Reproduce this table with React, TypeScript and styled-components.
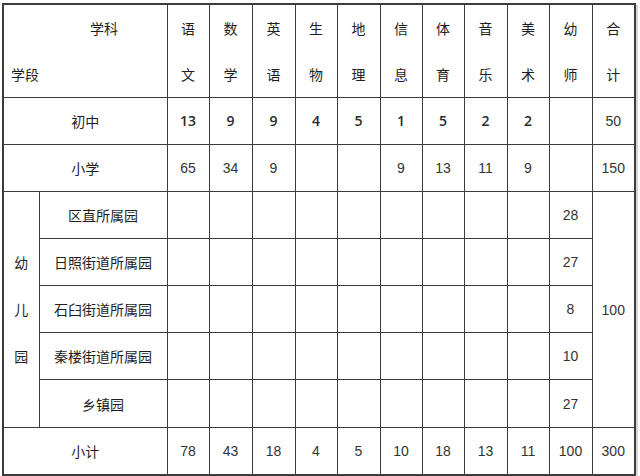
import styled, { createGlobalStyle } from 'styled-components'

const GlobalStyle = createGlobalStyle`
  html, body {
    margin: 0;
    padding: 0;
    background: #fff;
  }
  body {
    font-family: "Noto Sans CJK SC", "Liberation Sans", sans-serif;
    color: #1e1e1e;
  }
`

const subjects = ['语文', '数学', '英语', '生物', '地理', '信息', '体育', '音乐', '美术', '幼师', '合计']

const colWidths = [36, 128, 42, 43, 43, 42, 43, 42, 42, 43, 42, 43, 43]

const juniorRow = ['13', '9', '9', '4', '5', '1', '5', '2', '2', '', '50']
const primaryRow = ['65', '34', '9', '', '', '9', '13', '11', '9', '', '150']
const totalRow = ['78', '43', '18', '4', '5', '10', '18', '13', '11', '100', '300']

const kindergartens = [
  { name: '区直所属园', count: '28' },
  { name: '日照街道所属园', count: '27' },
  { name: '石臼街道所属园', count: '8' },
  { name: '秦楼街道所属园', count: '10' },
  { name: '乡镇园', count: '27' },
]

export default function App() {
  return (
    <>
      <GlobalStyle />
      <Page>
        <Table>
          <colgroup>
            {colWidths.map((w, i) => (
              <col key={i} style={{ width: w }} />
            ))}
          </colgroup>
          <tbody>
            <HeaderRow>
              <Cell colSpan={2}>
                <Corner>
                  <span className="top">学科</span>
                  <span className="bottom">学段</span>
                </Corner>
              </Cell>
              {subjects.map((s) => (
                <Cell key={s}>
                  <Stacked>
                    {s.split('').map((ch) => (
                      <span key={ch}>{ch}</span>
                    ))}
                  </Stacked>
                </Cell>
              ))}
            </HeaderRow>

            <BodyRow>
              <Cell colSpan={2}>初中</Cell>
              {juniorRow.map((v, i) => (
                <Num key={i} $bold={i < 9}>{v}</Num>
              ))}
            </BodyRow>

            <BodyRow>
              <Cell colSpan={2}>小学</Cell>
              {primaryRow.map((v, i) => (
                <Num key={i}>{v}</Num>
              ))}
            </BodyRow>

            {kindergartens.map((k, r) => (
              <BodyRow key={k.name} $h={r === 4 ? 48 : 47}>
                {r === 0 && (
                  <Cell rowSpan={5}>
                    <VerticalLabel>
                      <span>幼</span>
                      <span>儿</span>
                      <span>园</span>
                    </VerticalLabel>
                  </Cell>
                )}
                <Cell>{k.name}</Cell>
                {Array.from({ length: 9 }).map((_, i) => (
                  <Cell key={i} />
                ))}
                <Num>{k.count}</Num>
                {r === 0 && <Num rowSpan={5}>100</Num>}
              </BodyRow>
            ))}

            <BodyRow $h={47}>
              <Cell colSpan={2}>小计</Cell>
              {totalRow.map((v, i) => (
                <Num key={i}>{v}</Num>
              ))}
            </BodyRow>
          </tbody>
        </Table>
      </Page>
    </>
  )
}

const Page = styled.div`
  width: 640px;
  height: 476px;
  padding: 3px 0 0 2px;
  box-sizing: border-box;
  overflow: hidden;
`

const Table = styled.table`
  border-collapse: collapse;
  table-layout: fixed;
  width: 633px;
  border: 2px solid #3c3c3c;
  box-shadow: 2px 2px 0 #d6d6d6;
`

const HeaderRow = styled.tr`
  height: 93px;
`

const BodyRow = styled.tr<{ $h?: number }>`
  height: ${({ $h }) => $h ?? 47}px;
`

const Cell = styled.td`
  border: 1px solid #3c3c3c;
  padding: 0;
  text-align: center;
  vertical-align: middle;
  font-size: 14px;
  line-height: 20px;
  white-space: nowrap;
`

const Num = styled(Cell)<{ $bold?: boolean }>`
  font-family: ${({ $bold }) =>
    $bold ? '"Open Sans", "Liberation Sans", sans-serif' : '"Liberation Sans", sans-serif'};
  font-size: 14px;
  font-weight: ${({ $bold }) => ($bold ? 600 : 400)};
  color: ${({ $bold }) => ($bold ? '#2a2a2a' : '#333')};
`

const Stacked = styled.div`
  display: flex;
  flex-direction: column;
  align-items: center;
  line-height: 46px;
`

const Corner = styled.div`
  display: flex;
  flex-direction: column;
  line-height: 46px;
  text-align: left;

  .top {
    padding-left: 86px;
  }

  .bottom {
    padding-left: 7px;
  }
`

const VerticalLabel = styled.div`
  display: flex;
  flex-direction: column;
  align-items: center;
  line-height: 47px;
`
